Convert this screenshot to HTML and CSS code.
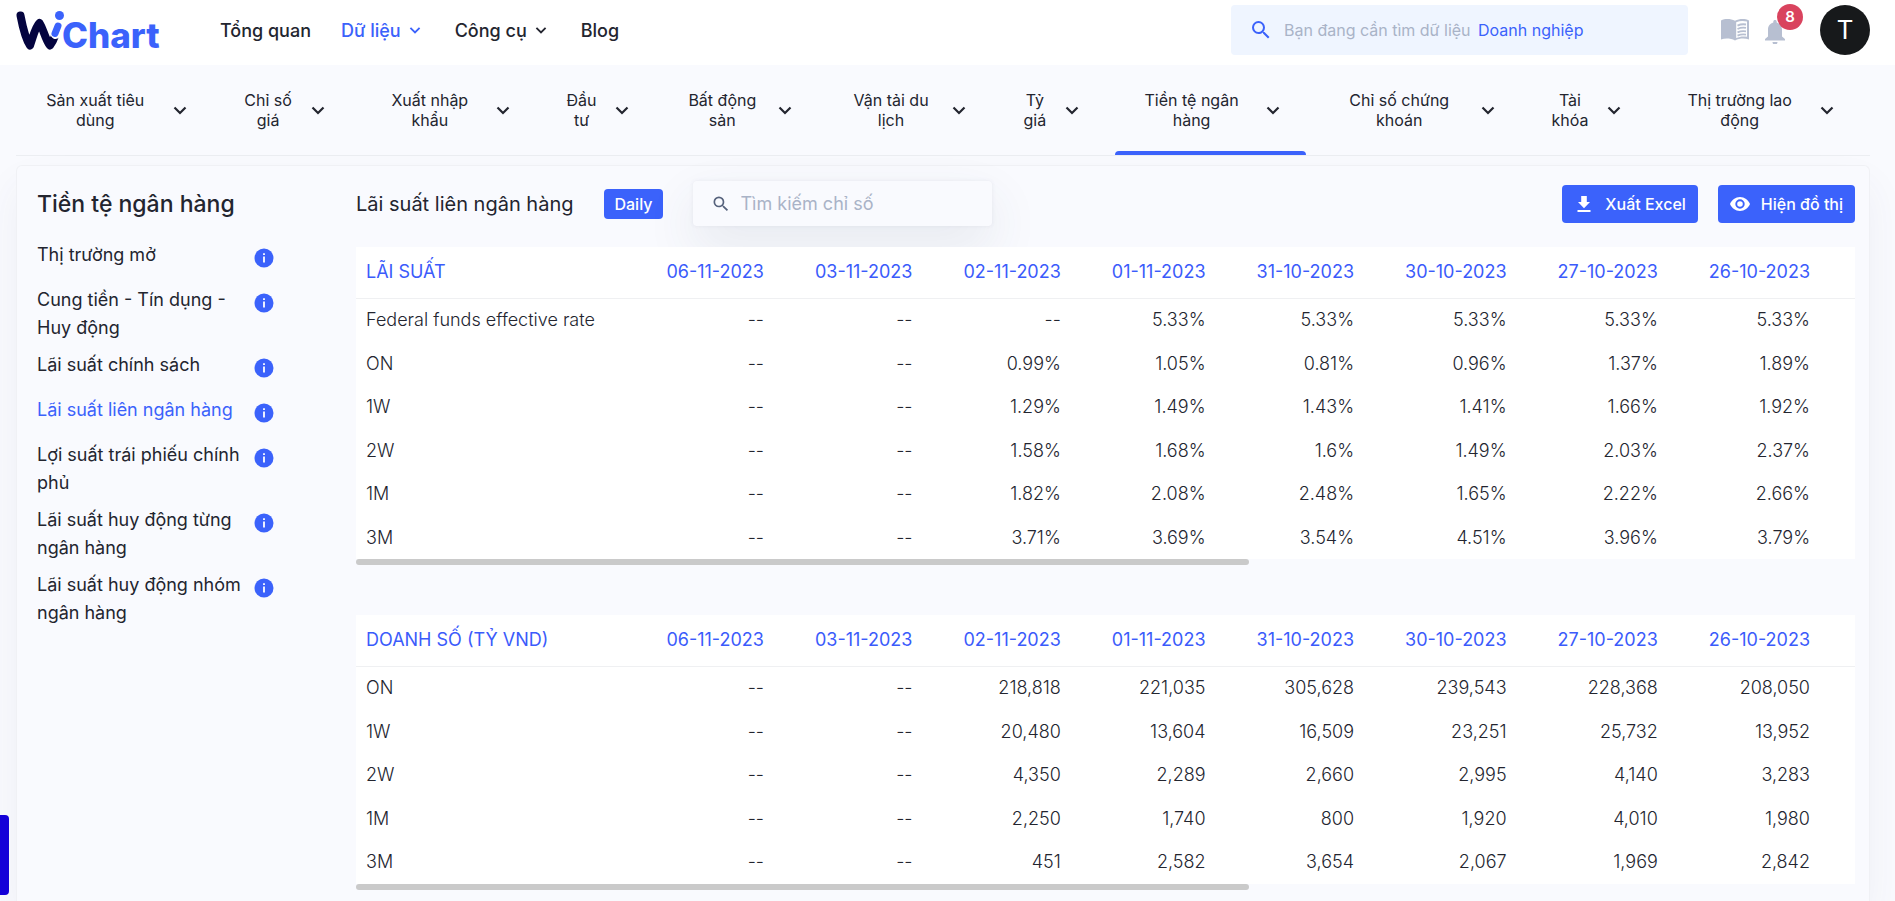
FILE: index.html
```html
<!DOCTYPE html>
<html lang="vi">
<head>
<meta charset="utf-8">
<meta name="viewport" content="width=device-width, initial-scale=1">
<title>WiChart - Lãi suất liên ngân hàng</title>
<link rel="stylesheet" href="styles.css">
</head>
<body>
<svg width="0" height="0" class="sprite" aria-hidden="true">
  <symbol id="chev" viewBox="0 0 24 24"><path d="M6.500 9.500l5.500 5.500 5.500-5.500" fill="none" stroke="currentColor" stroke-width="2.200"/></symbol>
  <symbol id="search" viewBox="0 0 24 24"><path fill="currentColor" d="M15.5 14h-.79l-.28-.27A6.47 6.47 0 0 0 16 9.5 6.5 6.5 0 1 0 9.5 16c1.61 0 3.09-.59 4.23-1.57l.27.28v.79l5 4.99L20.49 19l-4.99-5zm-6 0C7.01 14 5 11.99 5 9.5S7.01 5 9.5 5 14 7.01 14 9.5 11.99 14 9.5 14z"/></symbol>
  <symbol id="info" viewBox="0 0 20 20"><circle cx="10" cy="10" r="9.5" fill="#3b62fb"/><path fill="#fff" d="M9.1 5.2h1.8V7H9.1zM9.1 8.4h1.8v6.2H9.1z"/></symbol>
</svg>

<header class="header">
  <a class="logo" href="#" aria-label="WiChart">
    <svg width="152" height="54" viewBox="0 0 152 54" aria-hidden="true">
      <g fill="none" stroke-linecap="round" stroke-linejoin="round" stroke-width="8">
        <path stroke="#04043f" d="M4.500 12.500C6.500 23 9.500 36 14 42.500 16.500 36 19 24 23.500 20 27 25 29.500 37 34 42.500 36 40 37.500 37 38.500 34"/>
        <path stroke="#fff" stroke-width="10" d="M42.500 23l-3 8"/>
        <path stroke="#3b62fb" stroke-width="7" d="M42 23l-3 7.500"/>
      </g>
      <circle cx="43.500" cy="12.500" r="4.500" fill="#3b62fb"/>
      <text x="46" y="45" class="logo-text">Chart</text>
    </svg>
  </a>
  <nav class="menu">
    <a href="#">Tổng quan</a>
    <a href="#" class="on">Dữ liệu <svg class="i20"><use href="#chev"/></svg></a>
    <a href="#">Công cụ <svg class="i20"><use href="#chev"/></svg></a>
    <a href="#">Blog</a>
  </nav>
  <label class="top-search">
    <svg class="i24"><use href="#search"/></svg>
    <input type="text" placeholder="Bạn đang cần tìm dữ liệu">
    <span>Doanh nghiệp</span>
  </label>
  <div class="tools">
    <button class="tool" aria-label="Hướng dẫn"><svg width="28" height="24" viewBox="0 0 28 24"><path fill="#b7bfd1" d="M0 2.500C4 .5 9.500.5 14 2.800 18.500.5 24 .5 28 2.500V21.500C24 20 18.500 20 14 22.500 9.500 20 4 20 0 21.500z"/><path fill="#fff" d="M15.200 4.300C18.800 2.600 22.500 2.500 26 3.600V18.800C22.500 18 18.800 18.300 15.200 20z"/><path fill="none" stroke="#b7bfd1" stroke-width="1.800" d="M16.500 7.600Q20.500 5.700 25 6.500M16.500 11Q20.500 9.100 25 9.900M16.500 14.400Q20.500 12.500 25 13.300M16.500 17.600Q20.500 15.800 25 16.600"/></svg></button>
    <button class="tool bell" aria-label="Thông báo"><svg width="20" height="24" viewBox="0 0 20 24"><path fill="#b7bfd1" d="M10 0c1 0 1.700.7 1.700 1.700v.8c3.200.8 5.300 3.600 5.300 7v7l3 2.500v1.500H0V19l3-2.500v-7c0-3.400 2.100-6.200 5.300-7v-.8C8.300.7 9 0 10 0zM7.500 22h5A2.500 2.500 0 0 1 7.500 22z"/></svg><span class="badge">8</span></button>
    <button class="avatar">T</button>
  </div>
</header>

<main class="page">
  <nav class="tabs">
    <a href="#"><span>Sản xuất tiêu dùng</span><svg class="i24"><use href="#chev"/></svg></a>
    <a href="#"><span>Chỉ số giá</span><svg class="i24"><use href="#chev"/></svg></a>
    <a href="#"><span>Xuất nhập khẩu</span><svg class="i24"><use href="#chev"/></svg></a>
    <a href="#"><span>Đầu tư</span><svg class="i24"><use href="#chev"/></svg></a>
    <a href="#"><span>Bất động sản</span><svg class="i24"><use href="#chev"/></svg></a>
    <a href="#"><span>Vận tải du lịch</span><svg class="i24"><use href="#chev"/></svg></a>
    <a href="#"><span>Tỷ giá</span><svg class="i24"><use href="#chev"/></svg></a>
    <a href="#" class="active"><span>Tiền tệ ngân hàng</span><svg class="i24"><use href="#chev"/></svg></a>
    <a href="#"><span>Chỉ số chứng khoán</span><svg class="i24"><use href="#chev"/></svg></a>
    <a href="#"><span>Tài khóa</span><svg class="i24"><use href="#chev"/></svg></a>
    <a href="#"><span>Thị trường lao động</span><svg class="i24"><use href="#chev"/></svg></a>
  </nav>

  <div class="card">
    <aside class="side">
      <h1>Tiền tệ ngân hàng</h1>
      <ul>
        <li><a href="#">Thị trường mở</a><svg class="info"><use href="#info"/></svg></li>
        <li><a href="#">Cung tiền - Tín dụng - Huy động</a><svg class="info"><use href="#info"/></svg></li>
        <li><a href="#">Lãi suất chính sách</a><svg class="info"><use href="#info"/></svg></li>
        <li><a href="#" class="on">Lãi suất liên ngân hàng</a><svg class="info"><use href="#info"/></svg></li>
        <li><a href="#">Lợi suất trái phiếu chính phủ</a><svg class="info"><use href="#info"/></svg></li>
        <li><a href="#">Lãi suất huy động từng ngân hàng</a><svg class="info"><use href="#info"/></svg></li>
        <li><a href="#">Lãi suất huy động nhóm ngân hàng</a><svg class="info"><use href="#info"/></svg></li>
      </ul>
    </aside>

    <section class="content">
      <div class="bar">
        <h2>Lãi suất liên ngân hàng</h2>
        <button class="daily">Daily</button>
        <label class="find"><svg class="i20"><use href="#search"/></svg><input type="text" placeholder="Tìm kiếm chỉ số"></label>
        <div class="actions">
          <button class="btn"><svg width="20" height="20" viewBox="0 0 20 20"><path fill="#fff" d="M7.200 2h5.600v6H16l-6 6.200L4 8h3.200zM3.500 16h13v2h-13z"/></svg>Xuất Excel</button>
          <button class="btn"><svg width="20" height="20" viewBox="0 0 20 20"><path fill="#fff" fill-rule="evenodd" d="M10 3C5.500 3 1.700 5.900 0 10c1.700 4.100 5.500 7 10 7s8.300-2.900 10-7c-1.700-4.100-5.500-7-10-7zm0 11.700a4.700 4.700 0 1 1 0-9.400 4.700 4.700 0 0 1 0 9.400zM10 7.200a2.800 2.800 0 1 0 0 5.600 2.800 2.800 0 0 0 0-5.600z"/></svg>Hiện đồ thị</button>
        </div>
      </div>

      <table class="data">
        <thead><tr><th>LÃI SUẤT</th><th>06-11-2023</th><th>03-11-2023</th><th>02-11-2023</th><th>01-11-2023</th><th>31-10-2023</th><th>30-10-2023</th><th>27-10-2023</th><th>26-10-2023</th></tr></thead>
        <tbody>
          <tr><td>Federal funds effective rate</td><td>--</td><td>--</td><td>--</td><td>5.33%</td><td>5.33%</td><td>5.33%</td><td>5.33%</td><td>5.33%</td></tr>
          <tr><td>ON</td><td>--</td><td>--</td><td>0.99%</td><td>1.05%</td><td>0.81%</td><td>0.96%</td><td>1.37%</td><td>1.89%</td></tr>
          <tr><td>1W</td><td>--</td><td>--</td><td>1.29%</td><td>1.49%</td><td>1.43%</td><td>1.41%</td><td>1.66%</td><td>1.92%</td></tr>
          <tr><td>2W</td><td>--</td><td>--</td><td>1.58%</td><td>1.68%</td><td>1.6%</td><td>1.49%</td><td>2.03%</td><td>2.37%</td></tr>
          <tr><td>1M</td><td>--</td><td>--</td><td>1.82%</td><td>2.08%</td><td>2.48%</td><td>1.65%</td><td>2.22%</td><td>2.66%</td></tr>
          <tr><td>3M</td><td>--</td><td>--</td><td>3.71%</td><td>3.69%</td><td>3.54%</td><td>4.51%</td><td>3.96%</td><td>3.79%</td></tr>
        </tbody>
      </table>
      <div class="track"><div class="thumb"></div></div>

      <table class="data">
        <thead><tr><th>DOANH SỐ (TỶ VND)</th><th>06-11-2023</th><th>03-11-2023</th><th>02-11-2023</th><th>01-11-2023</th><th>31-10-2023</th><th>30-10-2023</th><th>27-10-2023</th><th>26-10-2023</th></tr></thead>
        <tbody>
          <tr><td>ON</td><td>--</td><td>--</td><td>218,818</td><td>221,035</td><td>305,628</td><td>239,543</td><td>228,368</td><td>208,050</td></tr>
          <tr><td>1W</td><td>--</td><td>--</td><td>20,480</td><td>13,604</td><td>16,509</td><td>23,251</td><td>25,732</td><td>13,952</td></tr>
          <tr><td>2W</td><td>--</td><td>--</td><td>4,350</td><td>2,289</td><td>2,660</td><td>2,995</td><td>4,140</td><td>3,283</td></tr>
          <tr><td>1M</td><td>--</td><td>--</td><td>2,250</td><td>1,740</td><td>800</td><td>1,920</td><td>4,010</td><td>1,980</td></tr>
          <tr><td>3M</td><td>--</td><td>--</td><td>451</td><td>2,582</td><td>3,654</td><td>2,067</td><td>1,969</td><td>2,842</td></tr>
        </tbody>
      </table>
      <div class="track"><div class="thumb"></div></div>
    </section>
  </div>
</main>
<div class="drawer"></div>
</body>
</html>
```
FILE: styles.css
```css
* { box-sizing: border-box; }
body {
  display: flex;
  flex-direction: column;
  min-height: 100vh;
  margin: 0;
  background: #f9fafe;
  color: #23252f;
  font-family: Inter, "Noto Sans", sans-serif;
  font-size: 18px;
}
a { color: inherit; text-decoration: none; }
button, input { font: inherit; border: 0; background: none; padding: 0; }
input { outline: 0; min-width: 0; }
svg { flex: none; }
.sprite { position: absolute; }
.i20 { width: 20px; height: 20px; }
.i24 { width: 24px; height: 24px; }
.on { color: #3b62fb; }

.header {
  display: flex;
  align-items: center;
  height: 65px;
  padding: 0 25px 5px 16px;
  background: #fff;
}
.logo { display: flex; }
.logo svg { overflow: visible; }
.logo-text {
  font: 800 35px Inter, sans-serif;
  fill: #3b62fb;
}
.menu { display: flex; gap: 30px; margin-left: 52px; font-weight: 500; }
.menu a { display: flex; align-items: center; gap: 4px; }
.top-search {
  display: flex;
  align-items: center;
  width: 457px;
  height: 50px;
  margin-left: auto;
  padding: 0 18px;
  border-radius: 4px;
  background: #eff5ff;
  color: #3b62fb;
  font-size: 16px;
}
.top-search input { width: 194px; margin-left: 11px; }
.top-search input::placeholder, .find input::placeholder { color: #a9b3c7; opacity: 1; }
.tools { display: flex; align-items: center; margin-left: 33px; }
.tool { display: flex; }
.bell { position: relative; margin: 4px 35px 0 16px; }
.badge {
  position: absolute;
  left: 12px;
  top: -16px;
  width: 26px;
  height: 26px;
  border-radius: 50%;
  background: #d9435e;
  color: #fff;
  font-size: 15px;
  font-weight: 600;
  line-height: 26px;
  text-align: center;
}
.avatar {
  width: 50px;
  height: 50px;
  border-radius: 50%;
  background: #17191b;
  color: #fff;
  font: 26px Roboto, sans-serif;
}

.page { display: flex; flex: 1; flex-direction: column; padding: 0 25px 0 16px; }
.tabs {
  display: grid;
  grid-template-columns: 197fr 129fr 175fr 109fr 153fr 165fr 103fr 191fr 205fr 117fr 203fr;
  gap: 10px;
  height: 91px;
  padding-right: 10px;
  border-bottom: 1px solid #eceef2;
  font-size: 16px;
  line-height: 20px;
  text-align: center;
}
.tabs a { display: flex; align-items: center; gap: 9px; padding: 0 21px 0 16px; }
.tabs span { flex: 1; }
.tabs .active { position: relative; }
.tabs .active::after {
  content: "";
  position: absolute;
  left: 0;
  right: 0;
  bottom: 0;
  height: 4px;
  border-radius: 4px 4px 0 0;
  background: #3b62fb;
}

.card {
  display: flex;
  flex: 1;
  margin-top: 9px;
  padding: 15px 14px 0 20px;
  border: 1px solid #f0f1f5;
  border-bottom: 0;
  border-radius: 6px 6px 0 0;
  background: #f9fafe;
  box-shadow: 0 20px 40px rgba(60, 70, 110, .06);
}
.side { width: 319px; flex: none; }
.side h1 { margin: 0; font-size: 23px; font-weight: 500; line-height: 46px; }
.side ul {
  display: grid;
  gap: 9px;
  width: 237px;
  margin: 14px 0 0;
  padding: 0;
  list-style: none;
}
.side li { display: flex; justify-content: space-between; min-height: 36px; line-height: 28px; }
.side li a { width: 210px; }
.info { width: 20px; height: 20px; margin-top: 7px; }

.content { flex: 1; min-width: 0; }
.bar { display: flex; align-items: center; height: 45px; margin-bottom: 21px; }
.bar h2 { margin: 0; font-size: 20px; font-weight: 400; }
.daily {
  height: 30px;
  margin: 0 30px 0 31px;
  padding: 0 10px;
  border-radius: 4px;
  background: #3b62fb;
  color: #fff;
  font-size: 16px;
  font-weight: 500;
}
.find {
  display: flex;
  align-items: center;
  gap: 10px;
  width: 299px;
  height: 45px;
  padding: 0 18px;
  border-radius: 4px;
  color: #56627c;
  box-shadow: 0 20px 50px rgba(60, 80, 100, .1), 0 0 4px rgba(60, 70, 100, .08);
}
.find input { flex: 1; }
.actions { display: flex; gap: 20px; margin-left: auto; }
.btn {
  display: flex;
  align-items: center;
  gap: 11px;
  height: 38px;
  padding: 0 12px;
  border-radius: 4px;
  background: #3b62fb;
  color: #fff;
  font-size: 16px;
  font-weight: 500;
}

.data {
  width: 100%;
  border-collapse: collapse;
  background: #fff;
  font-weight: 300;
  white-space: nowrap;
  position: relative;
}
.data th, .data td { padding: 0 25px 1px 26px; text-align: right; }
.data th {
  height: 51px;
  padding-bottom: 2px;
  border-bottom: 1px solid #eff0f2;
  color: #3b5bfb;
  font-weight: 400;
}
.data td { height: 43px; }
.data tr:nth-child(odd) td { height: 44px; }
.data th:first-child, .data td:first-child { width: 100%; padding-left: 10px; text-align: left; }
.data th:last-child, .data td:last-child { padding-right: 45px; }
.track { height: 6px; margin-bottom: 50px; }
.track:last-child { margin-bottom: 0; }
.thumb { width: 59.6%; height: 6px; border-radius: 3px; background: #cacaca; }

.drawer {
  position: fixed;
  left: 0;
  bottom: 6px;
  width: 9px;
  height: 80px;
  border-radius: 0 4px 4px 0;
  background: #1400d8;
}
```
